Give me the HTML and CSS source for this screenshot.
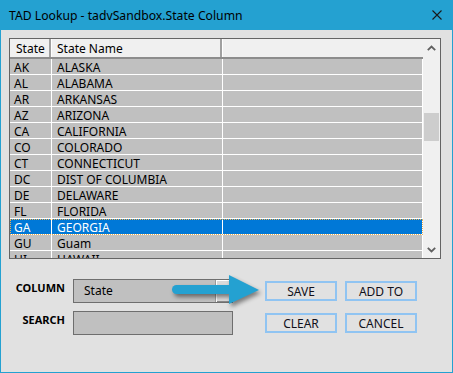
FILE: index.html
```html
<!DOCTYPE html>
<html>
<head>
    <title>TAD Lookup</title>
    <link rel="stylesheet" href="styles.css">
</head>
<body>
    <div class="window">
        <div class="titlebar">
            <span class="title">TAD Lookup - tadvSandbox.State Column</span>
            <svg class="close" width="10" height="10" viewBox="0 0 10 10">
                <path d="M0.5 0.5 L9.5 9.5 M9.5 0.5 L0.5 9.5" stroke="#1a1a1a" stroke-width="1.1" fill="none"/>
            </svg>
        </div>

        <div class="client">
            <div class="grid-box">
                <div class="table">
                    <div class="row head">
                        <div class="cell">State</div>
                        <div class="cell">State Name</div>
                        <div class="cell"></div>
                    </div>
                    <div class="row"><div class="cell">AK</div><div class="cell">ALASKA</div><div class="cell"></div></div>
                    <div class="row"><div class="cell">AL</div><div class="cell">ALABAMA</div><div class="cell"></div></div>
                    <div class="row"><div class="cell">AR</div><div class="cell">ARKANSAS</div><div class="cell"></div></div>
                    <div class="row"><div class="cell">AZ</div><div class="cell">ARIZONA</div><div class="cell"></div></div>
                    <div class="row"><div class="cell">CA</div><div class="cell">CALIFORNIA</div><div class="cell"></div></div>
                    <div class="row"><div class="cell">CO</div><div class="cell">COLORADO</div><div class="cell"></div></div>
                    <div class="row"><div class="cell">CT</div><div class="cell">CONNECTICUT</div><div class="cell"></div></div>
                    <div class="row"><div class="cell">DC</div><div class="cell">DIST OF COLUMBIA</div><div class="cell"></div></div>
                    <div class="row"><div class="cell">DE</div><div class="cell">DELAWARE</div><div class="cell"></div></div>
                    <div class="row"><div class="cell">FL</div><div class="cell">FLORIDA</div><div class="cell"></div></div>
                    <div class="row selected"><div class="cell">GA</div><div class="cell">GEORGIA</div><div class="cell"></div></div>
                    <div class="row"><div class="cell">GU</div><div class="cell">Guam</div><div class="cell"></div></div>
                    <div class="row"><div class="cell">HI</div><div class="cell">HAWAII</div><div class="cell"></div></div>
                </div>
                <div class="scrollbar">
                    <div class="sb-btn">
                        <svg width="9" height="6" viewBox="0 0 9 6"><path d="M0.8 5.2 L4.5 1.5 L8.2 5.2" stroke="#606060" stroke-width="1.8" fill="none"/></svg>
                    </div>
                    <div class="sb-track">
                        <div class="sb-thumb"></div>
                    </div>
                    <div class="sb-btn">
                        <svg width="9" height="6" viewBox="0 0 9 6"><path d="M0.8 0.8 L4.5 4.5 L8.2 0.8" stroke="#606060" stroke-width="1.8" fill="none"/></svg>
                    </div>
                </div>
            </div>

            <div class="controls">
                <div class="fields">
                    <label class="label">COLUMN</label>
                    <div class="combo">
                        <span class="combo-text">State</span>
                        <span class="combo-btn"></span>
                    </div>
                    <label class="label">SEARCH</label>
                    <div class="textbox"></div>
                </div>

                <div class="buttons">
                    <button class="btn">SAVE</button>
                    <button class="btn">ADD TO</button>
                    <button class="btn">CLEAR</button>
                    <button class="btn">CANCEL</button>
                </div>

                <svg class="pointer" width="100" height="42" viewBox="0 0 100 42">
                    <path d="M10.5 15 L66 15 L66 24 L10.5 24 A4.5 4.5 0 0 1 10.5 15 Z" fill="#24a1d1"/>
                    <path d="M63 5 L93 20 L63 34 Z" fill="#24a1d1"/>
                </svg>
            </div>
        </div>
    </div>
</body>
</html>
```

FILE: styles.css
```css
* {
    margin: 0;
    padding: 0;
    box-sizing: border-box;
}

body {
    background: #ffffff;
    font-family: 'Noto Sans', 'Open Sans', sans-serif;
    font-size: 12px;
    color: #000;
}

.window {
    width: 453px;
    height: 373px;
    display: flex;
    flex-direction: column;
    background: #24a1d1;
    padding: 0 1px 1px;
}

.titlebar {
    height: 30px;
    display: flex;
    align-items: center;
    justify-content: space-between;
    padding: 0 10px 0 8px;
}

.title {
    font-size: 12.2px;
    color: #000;
}

.client {
    flex: 1;
    background: #e1e1e1;
    padding: 8px 11px 0 8px;
}

/* list view */

.grid-box {
    display: flex;
    width: 432px;
    height: 221px;
    border: 1px solid #646464;
    background: #c0c0c0;
}

.table {
    flex: 1;
    overflow: hidden;
}

.row {
    display: grid;
    grid-template-columns: 42px 171px 1fr;
    height: 16px;
}

.cell {
    border-right: 1px solid #fff;
    border-bottom: 1px solid #fff;
    padding: 1px 0 0 4px;
    line-height: 16px;
    white-space: nowrap;
    overflow: hidden;
}

.cell:nth-child(2) {
    padding-left: 5px;
}

.row.head {
    height: 20px;
    background: #f0f0f0;
    border-bottom: 2px solid #8c8c8c;
}

.row.head .cell {
    border-bottom: none;
    padding-top: 1px;
    line-height: 18px;
    box-shadow: inset -2px 0 #a0a0a0;
}

.row.head .cell:first-child {
    padding-left: 6px;
}

.row.head .cell:last-child {
    box-shadow: none;
    border-right: none;
}

.row.selected {
    background: #0078d7;
    color: #fff;
    outline: 1px dotted #f0b050;
    outline-offset: -1px;
}

.scrollbar {
    width: 17px;
    background: #f0f0f0;
    display: flex;
    flex-direction: column;
}

.sb-btn {
    height: 17px;
    display: flex;
    align-items: center;
    justify-content: center;
}

.sb-track {
    flex: 1;
    padding: 57px 1px 0;
}

.sb-thumb {
    height: 28px;
    background: #cdcdcd;
}

/* bottom controls */

.controls {
    position: relative;
    display: flex;
    gap: 32px;
    margin-top: 20px;
}

.fields {
    display: grid;
    grid-template-columns: 56px 160px;
    column-gap: 8px;
    row-gap: 8px;
}

.label {
    font-weight: bold;
    font-size: 11px;
    text-align: right;
    padding-top: 1px;
    line-height: 15px;
}

.combo {
    height: 24px;
    display: flex;
    justify-content: space-between;
    background: #c0c0c0;
    border: 1px solid #6e6e6e;
}

.combo-text {
    padding-left: 10px;
    line-height: 21px;
}

.combo-btn {
    width: 17px;
    background: #dadada;
    border-left: 1px solid #9a9a9a;
    box-shadow: inset 1px 1px #fff, inset 0 -1px #888;
}

.textbox {
    height: 24px;
    background: #c0c0c0;
    border: 1px solid #6e6e6e;
}

.buttons {
    display: grid;
    grid-template-columns: 72px 72px;
    grid-auto-rows: 20px;
    column-gap: 8px;
    row-gap: 12px;
    margin-top: 2px;
}

.btn {
    font-family: 'Noto Sans', 'Open Sans', sans-serif;
    font-size: 12px;
    color: #10101a;
    background: #e1e1e1;
    border: 2px solid #90c4f2;
    line-height: 15px;
}

.pointer {
    position: absolute;
    left: 157px;
    top: -9px;
    filter: drop-shadow(2px 3px 2px rgba(0, 0, 0, 0.45));
}
```
